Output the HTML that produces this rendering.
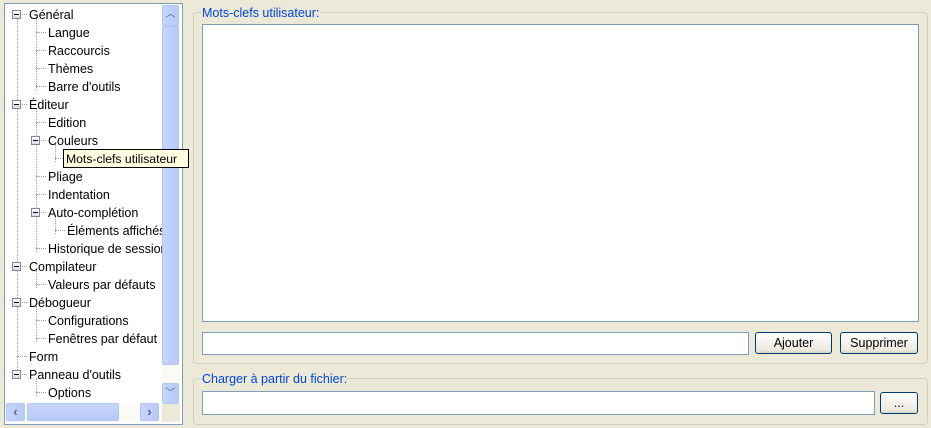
<!DOCTYPE html><html><head><style>
body{margin:0;width:931px;height:428px;background:#ece9d8;font-family:"Liberation Sans",sans-serif;font-size:12.5px;position:relative;overflow:hidden}
.a{position:absolute}
.tree{left:4px;top:3px;width:177px;height:420px;border:1px solid #7f9db9;background:#fff;overflow:hidden}
.r{position:absolute;height:18px;line-height:18px;white-space:nowrap;color:#000;margin-top:1px}
.ex{position:absolute;width:7px;height:7px;border:1px solid #7a8aa0;background:linear-gradient(#fff,#d8dde8);}
.ex:after{content:"";position:absolute;left:1px;top:3px;width:5px;height:1px;background:#000}
.vd{position:absolute;border-left:1px dotted #a0a0a0;width:0}
.hd{position:absolute;border-top:1px dotted #a0a0a0;height:0}
.sb{background:linear-gradient(90deg,#c7d5fc,#b6c9f6);border:1px solid #b3c5f3;border-radius:2px}
.btn{position:absolute;border:1px solid #003c74;border-radius:3px;background:linear-gradient(#fff,#ece9e0 85%,#d8d2c2);text-align:center;line-height:20px;font-size:12.5px}
.grp{position:absolute;border:1px solid #d0d0bf;border-radius:4px}
.lbl{position:absolute;background:#ece9d8;color:#0046d5;padding:0 1px}
.ed{position:absolute;background:#fff;border:1px solid #7f9db9}
</style></head><body>
<div class="a tree">
<div class="vd" style="left:12px;top:14px;height:360px"></div>
<div class="vd" style="left:31px;top:14px;height:72px"></div>
<div class="vd" style="left:31px;top:104px;height:144px"></div>
<div class="vd" style="left:50px;top:140px;height:18px"></div>
<div class="vd" style="left:50px;top:212px;height:18px"></div>
<div class="vd" style="left:31px;top:266px;height:18px"></div>
<div class="vd" style="left:31px;top:302px;height:36px"></div>
<div class="vd" style="left:31px;top:374px;height:18px"></div>
</div>
<div class="a" style="left:5px;top:4px;width:157px;height:400px;overflow:hidden">
<div class="r" style="top:1px;left:24px">Général</div>
<div class="r" style="top:19px;left:43px">Langue</div>
<div class="r" style="top:37px;left:43px">Raccourcis</div>
<div class="r" style="top:55px;left:43px">Thèmes</div>
<div class="r" style="top:73px;left:43px">Barre d'outils</div>
<div class="r" style="top:91px;left:24px">Éditeur</div>
<div class="r" style="top:109px;left:43px">Edition</div>
<div class="r" style="top:127px;left:43px">Couleurs</div>
<div class="r" style="top:163px;left:43px">Pliage</div>
<div class="r" style="top:181px;left:43px">Indentation</div>
<div class="r" style="top:199px;left:43px">Auto-complétion</div>
<div class="r" style="top:217px;left:62px">Éléments affichés</div>
<div class="r" style="top:235px;left:43px">Historique de session</div>
<div class="r" style="top:253px;left:24px">Compilateur</div>
<div class="r" style="top:271px;left:43px">Valeurs par défauts</div>
<div class="r" style="top:289px;left:24px">Débogueur</div>
<div class="r" style="top:307px;left:43px">Configurations</div>
<div class="r" style="top:325px;left:43px">Fenêtres par défaut</div>
<div class="r" style="top:343px;left:24px">Form</div>
<div class="r" style="top:361px;left:24px">Panneau d'outils</div>
<div class="r" style="top:379px;left:43px">Options</div>
<div class="hd" style="left:12px;top:10px;width:10px"></div>
<div class="hd" style="left:31px;top:28px;width:10px"></div><div class="hd" style="left:31px;top:46px;width:10px"></div><div class="hd" style="left:31px;top:64px;width:10px"></div><div class="hd" style="left:31px;top:82px;width:10px"></div>
<div class="hd" style="left:12px;top:100px;width:10px"></div><div class="hd" style="left:31px;top:118px;width:10px"></div><div class="hd" style="left:31px;top:136px;width:10px"></div>
<div class="hd" style="left:50px;top:154px;width:10px"></div><div class="hd" style="left:31px;top:172px;width:10px"></div><div class="hd" style="left:31px;top:190px;width:10px"></div><div class="hd" style="left:31px;top:208px;width:10px"></div><div class="hd" style="left:50px;top:226px;width:10px"></div><div class="hd" style="left:31px;top:244px;width:10px"></div>
<div class="hd" style="left:12px;top:262px;width:10px"></div><div class="hd" style="left:31px;top:280px;width:10px"></div><div class="hd" style="left:12px;top:298px;width:10px"></div><div class="hd" style="left:31px;top:316px;width:10px"></div><div class="hd" style="left:31px;top:334px;width:10px"></div><div class="hd" style="left:12px;top:352px;width:10px"></div><div class="hd" style="left:12px;top:370px;width:10px"></div><div class="hd" style="left:31px;top:388px;width:10px"></div>
<div class="ex" style="left:7px;top:6px"></div>
<div class="ex" style="left:7px;top:96px"></div>
<div class="ex" style="left:26px;top:132px"></div>
<div class="ex" style="left:26px;top:204px"></div>
<div class="ex" style="left:7px;top:258px"></div>
<div class="ex" style="left:7px;top:294px"></div>
<div class="ex" style="left:7px;top:366px"></div>
</div>
<div class="a" style="left:162px;top:4px;width:18px;height:400px;background:#fafaf6"></div>
<div class="a sb" style="left:162px;top:5px;width:15px;height:19px;text-align:center;line-height:18px;color:#4d6185;font-size:10px">︿</div>
<div class="a sb" style="left:162px;top:26px;width:15px;height:337px"></div>
<div class="a sb" style="left:162px;top:383px;width:15px;height:19px;text-align:center;line-height:20px;color:#4d6185;font-size:10px">﹀</div>
<div class="a" style="left:5px;top:404px;width:157px;height:18px;background:#fafaf6"></div>
<div class="a sb" style="left:6px;top:403px;width:17px;height:16px;text-align:center;line-height:16px;color:#4d6185;font-weight:bold">‹</div>
<div class="a sb" style="left:27px;top:403px;width:90px;height:16px;background:linear-gradient(#c7d5fc,#b6c9f6)"></div>
<div class="a sb" style="left:140px;top:403px;width:17px;height:16px;text-align:center;line-height:16px;color:#4d6185;font-weight:bold">›</div>
<div class="a" style="left:162px;top:404px;width:18px;height:18px;background:#ece9d8"></div>
<div class="a" style="left:63px;top:149px;width:122px;height:17px;background:#ffffe1;border:1px solid #000;line-height:18px;padding-left:2px;font-size:12.2px;white-space:nowrap;overflow:hidden">Mots-clefs utilisateur</div>
<div class="grp" style="left:193px;top:12px;width:733px;height:350px"></div>
<div class="lbl" style="left:201px;top:5px;line-height:16px">Mots-clefs utilisateur:</div>
<div class="ed" style="left:202px;top:24px;width:715px;height:296px"></div>
<div class="ed" style="left:202px;top:332px;width:545px;height:21px"></div>
<div class="btn" style="left:755px;top:332px;width:75px;height:20px">Ajouter</div>
<div class="btn" style="left:840px;top:332px;width:76px;height:20px">Supprimer</div>
<div class="grp" style="left:193px;top:378px;width:733px;height:45px"></div>
<div class="lbl" style="left:201px;top:371px;line-height:16px">Charger à partir du fichier:</div>
<div class="ed" style="left:202px;top:391px;width:671px;height:22px"></div>
<div class="btn" style="left:880px;top:392px;width:36px;height:20px">...</div>
</body></html>
